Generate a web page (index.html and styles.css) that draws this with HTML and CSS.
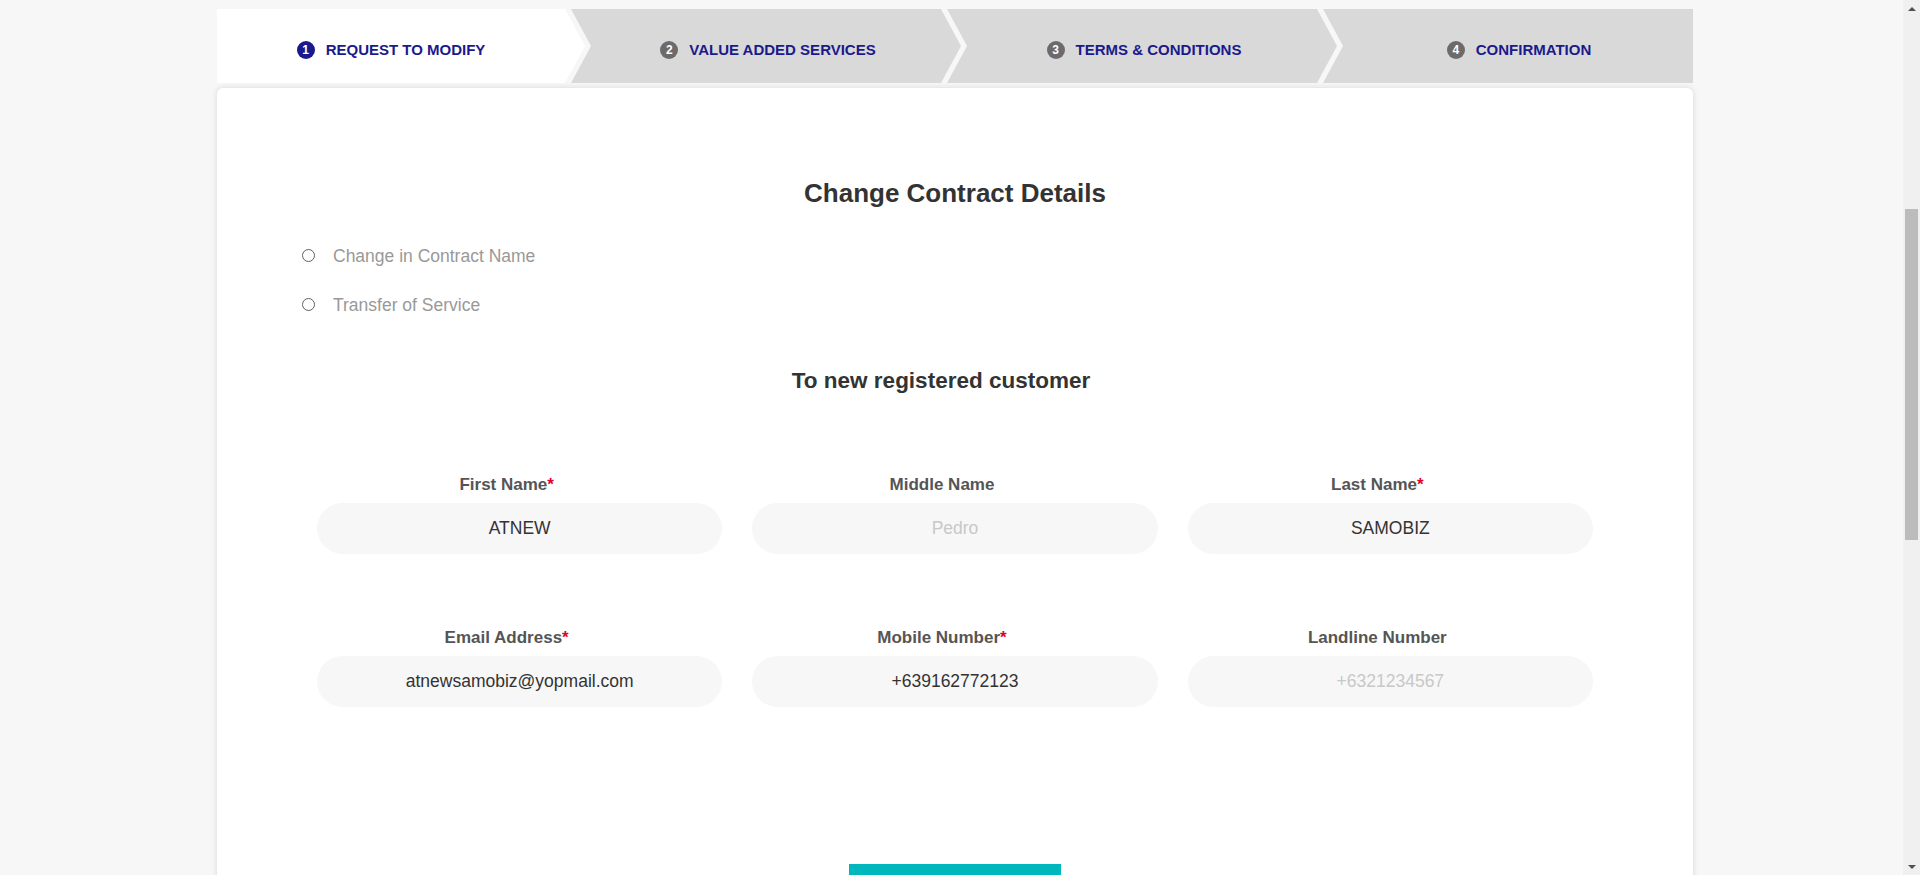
FILE: index.html
```html
<!DOCTYPE html>
<html lang="en">
<head>
<meta charset="utf-8">
<title>Change Contract Details</title>
<link rel="stylesheet" href="styles.css">
</head>
<body>
<div class="page">
  <ol class="stepper">
    <li class="step step-first step-active"><span class="num">1</span><span class="step-label">REQUEST TO MODIFY</span></li>
    <li class="step step-2"><span class="num">2</span><span class="step-label">VALUE ADDED SERVICES</span></li>
    <li class="step step-3"><span class="num">3</span><span class="step-label">TERMS &amp; CONDITIONS</span></li>
    <li class="step step-last"><span class="num">4</span><span class="step-label">CONFIRMATION</span></li>
  </ol>

  <main class="card">
    <h1 class="title">Change Contract Details</h1>

    <div class="radios">
      <label class="radio-row"><input type="radio" name="change" class="radio"><span class="radio-text">Change in Contract Name</span></label>
      <label class="radio-row"><input type="radio" name="change" class="radio"><span class="radio-text">Transfer of Service</span></label>
    </div>

    <h2 class="subtitle">To new registered customer</h2>

    <form class="form-grid">
      <div class="field">
        <label class="field-label">First Name<span class="req">*</span></label>
        <input class="field-input" type="text" value="ATNEW">
      </div>
      <div class="field">
        <label class="field-label">Middle Name</label>
        <input class="field-input" type="text" placeholder="Pedro">
      </div>
      <div class="field">
        <label class="field-label">Last Name<span class="req">*</span></label>
        <input class="field-input" type="text" value="SAMOBIZ">
      </div>
      <div class="field">
        <label class="field-label">Email Address<span class="req">*</span></label>
        <input class="field-input" type="text" value="atnewsamobiz@yopmail.com">
      </div>
      <div class="field">
        <label class="field-label">Mobile Number<span class="req">*</span></label>
        <input class="field-input" type="text" value="+639162772123">
      </div>
      <div class="field">
        <label class="field-label">Landline Number</label>
        <input class="field-input" type="text" placeholder="+6321234567">
      </div>
    </form>

    <div class="actions">
      <button class="btn-next" type="button">NEXT</button>
    </div>
  </main>
</div>

<div class="scrollbar" aria-hidden="true">
  <div class="sb-btn"><span class="sb-arrow-up"></span></div>
  <div class="sb-track"><div class="sb-thumb"></div></div>
  <div class="sb-btn"><span class="sb-arrow-down"></span></div>
</div>
</body>
</html>
```

FILE: styles.css
```css
html {
  background: #f7f7f7;
}
html::-webkit-scrollbar {
  display: none;
}
body {
  margin: 0;
  font-family: "Liberation Sans", Arial, sans-serif;
  color: #333;
}
.page {
  width: 1476px;
  margin-left: 217px;
  padding-top: 9px;
  padding-bottom: 40px;
}

/* Stepper */
.stepper {
  list-style: none;
  margin: 0;
  padding: 0;
  display: flex;
  height: 74px;
}
.step {
  display: flex;
  align-items: center;
  justify-content: center;
  height: 74px;
  padding-top: 8px;
  background: #d9d9d9;
  box-sizing: border-box;
  flex: none;
  margin-left: -14px;
}
.step-first {
  width: 368px;
  margin-left: 0;
  padding-right: 20px;
  clip-path: polygon(0 0, calc(100% - 20px) 0, 100% 50%, calc(100% - 20px) 100%, 0 100%);
}
.step-2,
.step-3 {
  padding-left: 22px;
  padding-right: 18px;
  clip-path: polygon(0 0, calc(100% - 20px) 0, 100% 50%, calc(100% - 20px) 100%, 0 100%, 20px 50%);
}
.step-2 {
  width: 390px;
}
.step-3 {
  width: 390px;
}
.step-last {
  width: 370px;
  padding-left: 22px;
  clip-path: polygon(0 0, 100% 0, 100% 100%, 0 100%, 20px 50%);
}
.step-active {
  background: #fff;
}
.num {
  width: 18px;
  height: 18px;
  border-radius: 50%;
  background: #6b6b6b;
  color: #fff;
  font-size: 12px;
  font-weight: bold;
  line-height: 18px;
  text-align: center;
  margin-right: 11px;
}
.step-active .num {
  background: #1b1a8c;
}
.step-label {
  color: #1b1a8c;
  font-size: 15px;
  font-weight: bold;
  line-height: 18px;
}

/* Card */
.card {
  display: block;
  margin-top: 5px;
  background: #fff;
  border-radius: 6px;
  box-shadow: 0 0 6px rgba(0, 0, 0, 0.13);
  padding: 90px 0 140px;
}
.title {
  margin: 0;
  text-align: center;
  font-size: 26px;
  line-height: 30px;
  font-weight: bold;
  color: #333;
}
.radios {
  margin-top: 36px;
  padding-left: 85px;
  display: flex;
  flex-direction: column;
  gap: 25px;
}
.radio-row {
  display: flex;
  align-items: center;
  height: 24px;
}
.radio {
  appearance: none;
  -webkit-appearance: none;
  width: 13px;
  height: 13px;
  margin: 0 18px 0 0;
  border: 1px solid #5f5f5f;
  border-radius: 50%;
  background: #fff;
  box-sizing: border-box;
  position: relative;
  top: -1px;
}
.radio-text {
  font-size: 17.5px;
  color: #999;
}
.subtitle {
  margin: 51px 0 0;
  padding-right: 28px;
  text-align: center;
  font-size: 22.5px;
  line-height: 26px;
  font-weight: bold;
  color: #333;
}
.form-grid {
  margin-top: 81px;
  padding: 0 100px;
  display: grid;
  grid-template-columns: repeat(3, 1fr);
  column-gap: 30px;
  row-gap: 74px;
}
.field {
  display: flex;
  flex-direction: column;
  align-items: stretch;
}
.field-label {
  text-align: center;
  font-size: 17px;
  font-weight: bold;
  line-height: 20px;
  color: #555;
  margin-bottom: 8px;
  padding-right: 26px;
}
.req {
  color: #e4002b;
}
.field-input {
  height: 51px;
  border: 0;
  border-radius: 26px;
  background: #f7f7f7;
  text-align: center;
  font-family: "Liberation Sans", Arial, sans-serif;
  font-size: 17.5px;
  color: #333;
  outline: none;
  padding: 0 20px;
}
.field-input::placeholder {
  color: #c8c8c8;
}
.actions {
  display: flex;
  justify-content: center;
  margin-top: 157px;
}
.btn-next {
  width: 212px;
  height: 50px;
  border: 0;
  background: #00b7bd;
  color: #fff;
  font-family: "Liberation Sans", Arial, sans-serif;
  font-size: 16px;
  font-weight: bold;
}

/* Window scrollbar, drawn over the right edge */
.scrollbar {
  position: fixed;
  top: 0;
  right: 0;
  width: 17px;
  height: 100vh;
  background: #f0f0f0;
  display: flex;
  flex-direction: column;
}
.sb-btn {
  height: 17px;
  flex: none;
  display: flex;
  align-items: center;
  justify-content: center;
}
.sb-track {
  flex: 1;
  padding: 0 2px;
}
.sb-thumb {
  margin-top: 192px;
  height: 331px;
  background: #bcbcbc;
}
.sb-arrow-up {
  width: 0;
  height: 0;
  border-left: 4px solid transparent;
  border-right: 4px solid transparent;
  border-bottom: 4px solid #505050;
}
.sb-arrow-down {
  width: 0;
  height: 0;
  border-left: 4px solid transparent;
  border-right: 4px solid transparent;
  border-top: 4px solid #505050;
}
```
